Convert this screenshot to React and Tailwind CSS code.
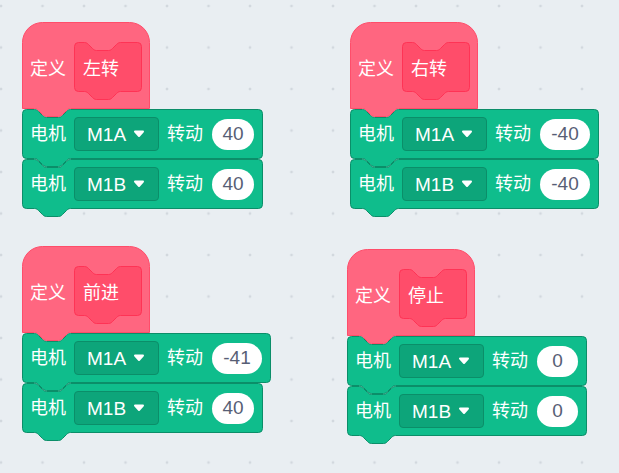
const FONT = "font-['Liberation_Sans','Noto_Sans_CJK_SC',sans-serif]";

// scratch-style notch: 36 wide, 8 deep
function stackPath(w, h, s = 12, r = 4) {
  return (
    `M0,${r} A${r},${r} 0 0 1 ${r},0 H${s} ` +
    "c2,0 3,1 4,2 l4,4 c1,1 2,2 4,2 h12 c2,0 3,-1 4,-2 l4,-4 c1,-1 2,-2 4,-2 " +
    `H${w - r} A${r},${r} 0 0 1 ${w},${r} V${h - r} A${r},${r} 0 0 1 ${w - r},${h} H${s + 36} ` +
    "c-2,0 -3,1 -4,2 l-4,4 c-1,1 -2,2 -4,2 h-12 c-2,0 -3,-1 -4,-2 l-4,-4 c-1,-1 -2,-2 -4,-2 " +
    `H${r} A${r},${r} 0 0 1 0,${h - r} Z`
  );
}

function hatPath(w, h, s = 12, R = 20) {
  return (
    `M0,${R} A${R},${R} 0 0 1 ${R},0 H${w - R} A${R},${R} 0 0 1 ${w},${R} V${h} H${s + 36} ` +
    "c-2,0 -3,1 -4,2 l-4,4 c-1,1 -2,2 -4,2 h-12 c-2,0 -3,-1 -4,-2 l-4,-4 c-1,-1 -2,-2 -4,-2 " +
    "H0 Z"
  );
}

function Shape({ d, w, h, fill, stroke }) {
  return (
    <svg className="absolute left-0 top-0 overflow-visible" width={w} height={h}>
      <path d={d} transform="translate(0.5 0.5)" fill={fill} stroke={stroke} strokeWidth="1" />
    </svg>
  );
}

function DefineHat({ name }) {
  return (
    <div className="relative w-[128px] h-[87px]">
      <Shape d={hatPath(127, 86)} w={128} h={87} fill="#ff6680" stroke="#ff4d6a" />
      <div className="relative flex items-start gap-[8px] pl-[8px] pt-[20px] text-white text-[18px]">
        <span className="h-[50px] w-[36px] flex items-center pt-[5px] whitespace-nowrap">定义</span>
        <div className="relative w-[68px] h-[50px]">
          <Shape d={stackPath(67, 49, 10)} w={68} h={50} fill="#ff4d6a" stroke="#ff3355" />
          <span className="relative h-full flex items-center pl-[9px] pt-[5px] whitespace-nowrap">{name}</span>
        </div>
      </div>
    </div>
  );
}

function Arrow() {
  return (
    <svg width="12" height="8" viewBox="0 0 12 8">
      <path d="M2,1.5 H10 L6,6 Z" fill="#fff" stroke="#fff" strokeWidth="2" strokeLinejoin="round" />
    </svg>
  );
}

function MotorBlock({ port, value, ovalW }) {
  const w = 199 + ovalW;
  return (
    <div className="relative h-[50px]" style={{ width: w }}>
      <Shape d={stackPath(w - 1, 49)} w={w} h={50} fill="#0fbd8c" stroke="#0b8e69" />
      <div className="relative h-full flex items-center pl-[8px] text-white text-[18px]">
        <span className="w-[36px] whitespace-nowrap">电机</span>
        <div className="ml-[8px] w-[85px] h-[34px] rounded-[4px] bg-[#0da57a] border border-[#0b8e69] flex items-center pl-[12px] gap-[7px]">
          <span className="text-[19px] leading-none">{port}</span>
          <Arrow />
        </div>
        <span className="ml-[8px] w-[36px] whitespace-nowrap">转动</span>
        <div
          className="ml-[9px] h-[31px] rounded-full bg-white flex items-center justify-center pt-[1px] text-[19px] text-[#575e75]"
          style={{ width: ovalW }}
        >
          {value}
        </div>
      </div>
    </div>
  );
}

const scripts = [
  { name: "左转", pos: "left-[22px] top-[22px]", a: ["40", 42], b: ["40", 42] },
  { name: "右转", pos: "left-[350px] top-[22px]", a: ["-40", 50], b: ["-40", 50] },
  { name: "前进", pos: "left-[22px] top-[246px]", a: ["-41", 50], b: ["40", 42] },
  { name: "停止", pos: "left-[347px] top-[249px]", a: ["0", 41], b: ["0", 41] },
];

export default function App() {
  return (
    <div
      className={`relative w-[619px] h-[473px] overflow-hidden bg-[#e9eef2] bg-[radial-gradient(circle,#d2d8de_1.1px,transparent_1.7px)] bg-[size:41.5px_41.5px] bg-[position:-19.75px_-14.75px] ${FONT}`}
    >
      {scripts.map((s) => (
        <div key={s.name} className={`absolute ${s.pos} flex flex-col`}>
          <DefineHat name={s.name} />
          <MotorBlock port="M1A" value={s.a[0]} ovalW={s.a[1]} />
          <MotorBlock port="M1B" value={s.b[0]} ovalW={s.b[1]} />
        </div>
      ))}
    </div>
  );
}
